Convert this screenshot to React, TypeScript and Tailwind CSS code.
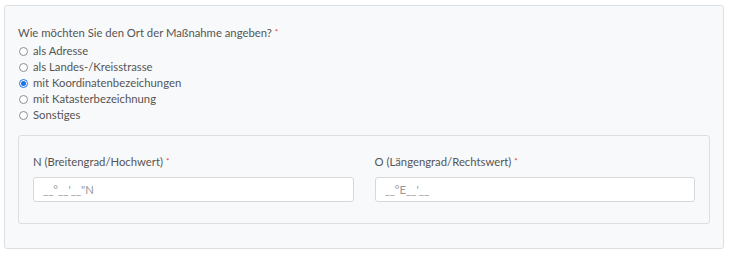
const options = [
  { label: "als Adresse", checked: false },
  { label: "als Landes-/Kreisstrasse", checked: false },
  { label: "mit Koordinatenbezeichungen", checked: true },
  { label: "mit Katasterbezeichnung", checked: false },
  { label: "Sonstiges", checked: false },
];

function Radio({ checked }: { checked: boolean }) {
  if (checked) {
    return (
      <span className="w-[9px] h-[9px] rounded-full border border-[#1a73e8] bg-white flex items-center justify-center shrink-0">
        <span className="w-[5px] h-[5px] rounded-full bg-[#1a73e8]" />
      </span>
    );
  }
  return <span className="w-[9px] h-[9px] rounded-full border border-[#8f8f8f] bg-white shrink-0" />;
}

function Req() {
  return <span className="text-[#e53935] text-[8px] align-top relative top-[-1px]">*</span>;
}

function Field({ label, placeholder }: { label: string; placeholder: string }) {
  return (
    <div className="flex-1">
      <div className="text-[11.3px] leading-[14px] text-[#555] mb-[7px]">
        {label} <Req />
      </div>
      <input
        className="w-full h-[25px] bg-white border border-[#d6d9dc] rounded-[3px] px-[9px] text-[11.3px] text-[#555] placeholder:text-[#999] outline-none"
        placeholder={placeholder}
        style={{ fontFamily: "inherit" }}
      />
    </div>
  );
}

export default function App() {
  return (
    <div className="w-[730px] h-[255px] bg-white pt-[5px] pl-[4px]" style={{ fontFamily: "Lato, 'Liberation Sans', sans-serif" }}>
      <div className="w-[720px] h-[244px] bg-[#f8f9fa] border border-[#dcdfe2] rounded-[3px] px-[13px] pt-[20px]">
        <div className="text-[11.3px] leading-[14px] text-[#555] mb-[3px]">
          Wie möchten Sie den Ort der Maßnahme angeben? <Req />
        </div>
        <div className="flex flex-col">
          {options.map((o) => (
            <label key={o.label} className="flex items-center gap-[5px] h-[16.2px] pl-[1px] text-[11.3px] text-[#555]">
              <Radio checked={o.checked} />
              <span>{o.label}</span>
            </label>
          ))}
        </div>
        <div className="mt-[11px] border border-[#dcdfe2] rounded-[3px] h-[89px] px-[14px] pt-[19px] flex gap-[21px]">
          <Field label="N (Breitengrad/Hochwert)" placeholder={"__°__'__\"N"} />
          <Field label="O (Längengrad/Rechtswert)" placeholder={"__°E__'__"} />
        </div>
      </div>
    </div>
  );
}
